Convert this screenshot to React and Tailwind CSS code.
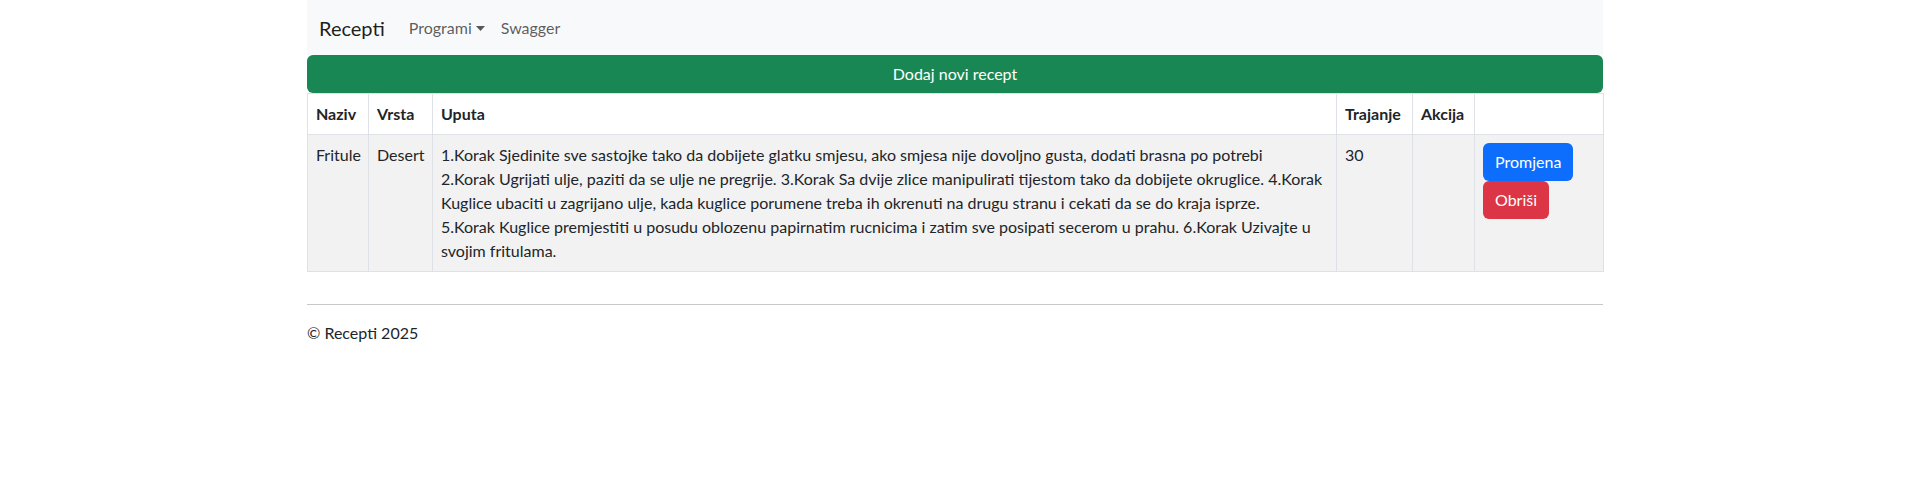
export default function App() {
  return (
    <div className="min-h-[496px] bg-white text-[16px] leading-6 text-[#212529]" style={{ fontFamily: 'Lato, "Liberation Sans", sans-serif' }}>
      <div className="ml-[307px] w-[1296px]">
        {/* Navbar */}
        <nav className="flex h-[55px] items-center bg-[#f8f9fa] px-3">
          <a className="mr-4 py-[5px] text-[20px] leading-[30px] text-[rgba(0,0,0,0.9)]">Recepti</a>
          <div className="flex items-center">
            <a className="flex items-center px-2 text-[rgba(0,0,0,0.65)]">
              Programi
              <svg className="ml-[4px] mt-[1px]" width="9" height="5" viewBox="0 0 9 5">
                <path d="M0 0 L9 0 L4.5 5 Z" fill="rgba(0,0,0,0.65)" />
              </svg>
            </a>
            <a className="px-2 text-[rgba(0,0,0,0.65)]">Swagger</a>
          </div>
        </nav>

        <main className="pb-4">
          {/* Add button */}
          <button className="block h-[38px] w-full rounded-[6px] bg-[#198754] text-center text-white">
            Dodaj novi recept
          </button>

          {/* Table */}
          <table className="w-full table-fixed border-collapse">
            <colgroup>
              <col className="w-[61px]" />
              <col className="w-[64px]" />
              <col className="w-[904px]" />
              <col className="w-[76px]" />
              <col className="w-[62px]" />
              <col className="w-[129px]" />
            </colgroup>
            <thead>
              <tr className="bg-white">
                <th className="border border-[#dee2e6] p-2 text-left align-bottom font-bold">Naziv</th>
                <th className="border border-[#dee2e6] p-2 text-left align-bottom font-bold">Vrsta</th>
                <th className="border border-[#dee2e6] p-2 text-left align-bottom font-bold">Uputa</th>
                <th className="border border-[#dee2e6] p-2 text-left align-bottom font-bold">Trajanje</th>
                <th className="border border-[#dee2e6] p-2 text-left align-bottom font-bold">Akcija</th>
                <th className="border border-[#dee2e6] p-2"></th>
              </tr>
            </thead>
            <tbody>
              <tr className="bg-[#f2f2f2] align-top">
                <td className="border border-[#dee2e6] p-2">Fritule</td>
                <td className="border border-[#dee2e6] p-2">Desert</td>
                <td className="border border-[#dee2e6] p-2">
                  1.Korak Sjedinite sve sastojke tako da dobijete glatku smjesu, ako smjesa nije dovoljno gusta, dodati brasna po potrebi<br />
                  2.Korak Ugrijati ulje, paziti da se ulje ne pregrije. 3.Korak Sa dvije zlice manipulirati tijestom tako da dobijete okruglice. 4.Korak<br />
                  Kuglice ubaciti u zagrijano ulje, kada kuglice porumene treba ih okrenuti na drugu stranu i cekati da se do kraja isprze.<br />
                  5.Korak Kuglice premjestiti u posudu oblozenu papirnatim rucnicima i zatim sve posipati secerom u prahu. 6.Korak Uzivajte u<br />
                  svojim fritulama.
                </td>
                <td className="border border-[#dee2e6] p-2">30</td>
                <td className="border border-[#dee2e6] p-2"></td>
                <td className="border border-[#dee2e6] p-2">
                  <div className="flex flex-col items-start">
                    <button className="h-[38px] rounded-[6px] bg-[#0d6efd] px-3 text-white">Promjena</button>
                    <button className="h-[38px] rounded-[6px] bg-[#dc3545] px-3 text-white">Obriši</button>
                  </div>
                </td>
              </tr>
            </tbody>
          </table>
        </main>

        {/* Footer */}
        <hr className="my-4 border-t border-[#c8c8c8]" />
        <footer>© Recepti 2025</footer>
      </div>
    </div>
  );
}
